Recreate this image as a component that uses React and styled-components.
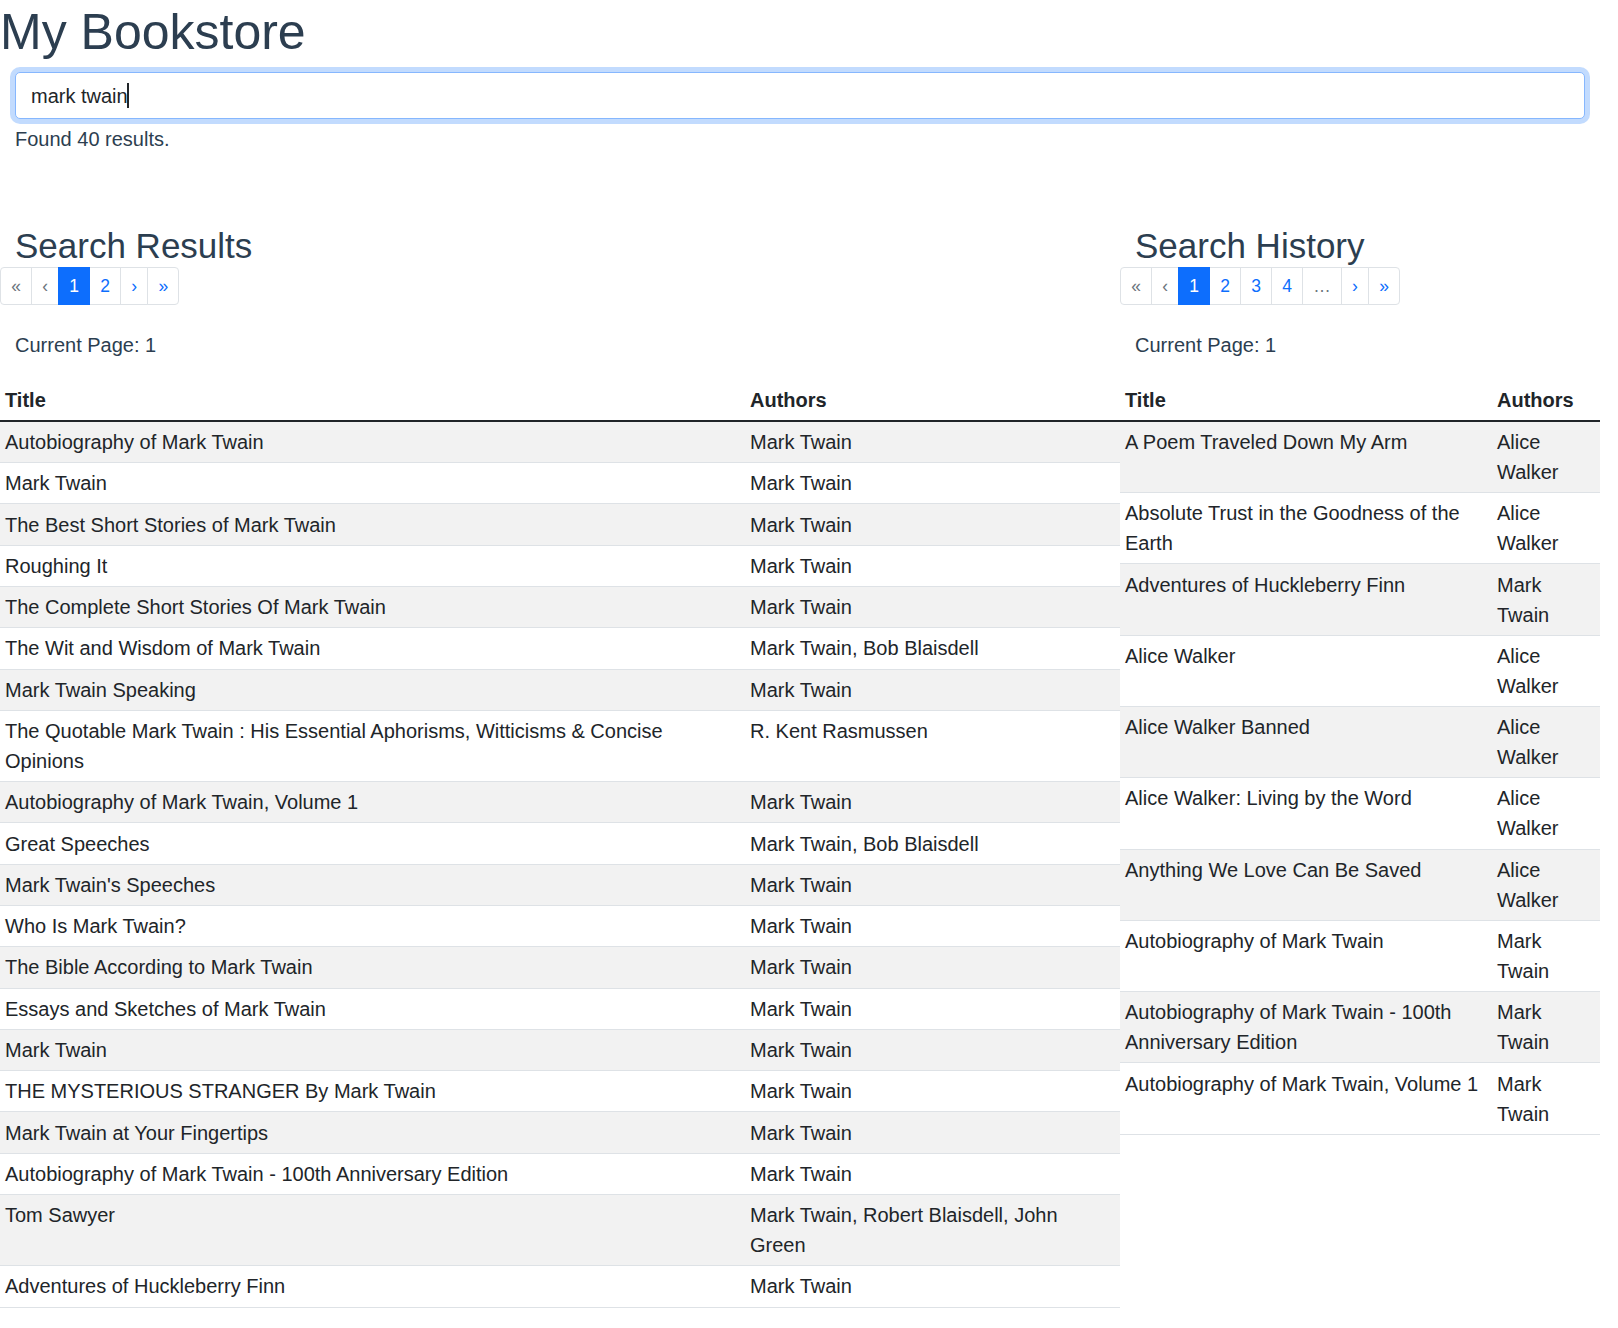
import styled, { createGlobalStyle } from 'styled-components'

const GlobalStyle = createGlobalStyle`
  body {
    margin: 0;
    font-family: "Liberation Sans", Arial, Helvetica, sans-serif;
    font-size: 20px;
    line-height: 1.5;
    color: #2c3e50;
    background: #fff;
  }
  * {
    box-sizing: border-box;
  }
`

const Page = styled.div`
  width: 1600px;
  padding-top: 2px;
`

const Title = styled.h1`
  margin: 0 0 10px;
  font-size: 50px;
  font-weight: 500;
  line-height: 1.2;
`

const SearchArea = styled.div`
  padding: 0 15px;
`

const InputWrap = styled.div`
  position: relative;
`

const SearchInput = styled.input`
  display: block;
  width: 100%;
  padding: 7.5px 15px;
  font-family: inherit;
  font-size: 20px;
  line-height: 1.5;
  color: #212529;
  background: #fff;
  border: 1px solid #86b7fe;
  border-radius: 5px;
  outline: 0;
  box-shadow: 0 0 0 5px rgba(13, 110, 253, 0.25);
  caret-color: transparent;
`

// text caret drawn over the input so the focused look stays in the picture
const Caret = styled.span`
  position: absolute;
  left: ${(p) => p.$left}px;
  top: 11px;
  width: 1.5px;
  height: 25px;
  background: #212529;
  pointer-events: none;
`

const ResultCount = styled.div`
  margin-top: 5px;
  font-size: 20px;
`

const Columns = styled.div`
  display: flex;
  margin-top: 70.5px;
`

const Column = styled.section`
  flex: 0 0 ${(p) => p.$width}px;
`

const SectionHeading = styled.h3`
  margin: 0;
  padding: 0 15px;
  font-size: 35px;
  font-weight: 500;
  line-height: 1.2;
`

const Pager = styled.ul`
  display: flex;
  margin: 0;
  padding: 0;
  list-style: none;
`

const PageItem = styled.li`
  & + & {
    margin-left: -1px;
  }
  &:first-child span {
    border-radius: 4px 0 0 4px;
  }
  &:last-child span {
    border-radius: 0 4px 4px 0;
  }
`

const PageLink = styled.span`
  display: block;
  padding: 5px 10.15px;
  font-size: 17.5px;
  line-height: 1.5;
  border: 1px solid ${(p) => (p.$active ? '#0d6efd' : '#dee2e6')};
  background: ${(p) => (p.$active ? '#0d6efd' : '#fff')};
  color: ${(p) => (p.$active ? '#fff' : p.$disabled ? '#6c757d' : '#0d6efd')};
  position: relative;
  z-index: ${(p) => (p.$active ? 2 : 0)};
`

const CurrentPage = styled.p`
  margin: 24.75px 0 20.4px;
  padding: 0 15px;
`

const Table = styled.table`
  width: 100%;
  border-collapse: collapse;
  color: #212529;
  margin-bottom: 20px;
`

const HeadCell = styled.th`
  width: ${(p) => (p.$width ? `${p.$width}px` : 'auto')};
  padding: 5px;
  text-align: left;
  vertical-align: top;
  font-weight: bold;
  line-height: 30px;
  border-bottom: 2px solid #212529;
`

const Row = styled.tr`
  background: ${(p) => (p.$striped ? '#f2f2f2' : '#fff')};
  border-bottom: 1px solid #dee2e6;
`

const Cell = styled.td`
  padding: 5.15px 5px;
  vertical-align: top;
  line-height: 30px;
`

const results = [
  ['Autobiography of Mark Twain', 'Mark Twain'],
  ['Mark Twain', 'Mark Twain'],
  ['The Best Short Stories of Mark Twain', 'Mark Twain'],
  ['Roughing It', 'Mark Twain'],
  ['The Complete Short Stories Of Mark Twain', 'Mark Twain'],
  ['The Wit and Wisdom of Mark Twain', 'Mark Twain, Bob Blaisdell'],
  ['Mark Twain Speaking', 'Mark Twain'],
  ['The Quotable Mark Twain : His Essential Aphorisms, Witticisms & Concise Opinions', 'R. Kent Rasmussen'],
  ['Autobiography of Mark Twain, Volume 1', 'Mark Twain'],
  ['Great Speeches', 'Mark Twain, Bob Blaisdell'],
  ["Mark Twain's Speeches", 'Mark Twain'],
  ['Who Is Mark Twain?', 'Mark Twain'],
  ['The Bible According to Mark Twain', 'Mark Twain'],
  ['Essays and Sketches of Mark Twain', 'Mark Twain'],
  ['Mark Twain', 'Mark Twain'],
  ['THE MYSTERIOUS STRANGER By Mark Twain', 'Mark Twain'],
  ['Mark Twain at Your Fingertips', 'Mark Twain'],
  ['Autobiography of Mark Twain - 100th Anniversary Edition', 'Mark Twain'],
  ['Tom Sawyer', 'Mark Twain, Robert Blaisdell, John Green'],
  ['Adventures of Huckleberry Finn', 'Mark Twain'],
]

const history = [
  ['A Poem Traveled Down My Arm', 'Alice Walker'],
  ['Absolute Trust in the Goodness of the Earth', 'Alice Walker'],
  ['Adventures of Huckleberry Finn', 'Mark Twain'],
  ['Alice Walker', 'Alice Walker'],
  ['Alice Walker Banned', 'Alice Walker'],
  ['Alice Walker: Living by the Word', 'Alice Walker'],
  ['Anything We Love Can Be Saved', 'Alice Walker'],
  ['Autobiography of Mark Twain', 'Mark Twain'],
  ['Autobiography of Mark Twain - 100th Anniversary Edition', 'Mark Twain'],
  ['Autobiography of Mark Twain, Volume 1', 'Mark Twain'],
]

function Pagination({ pages }) {
  const items = [
    { label: '«', disabled: true },
    { label: '‹', disabled: true },
    ...pages.map((p, i) => ({ label: p, active: i === 0, disabled: p === '…' })),
    { label: '›' },
    { label: '»' },
  ]
  return (
    <Pager>
      {items.map((it, i) => (
        <PageItem key={i}>
          <PageLink $active={it.active} $disabled={it.disabled}>
            {it.label}
          </PageLink>
        </PageItem>
      ))}
    </Pager>
  )
}

function BookTable({ books, titleWidth }) {
  return (
    <Table>
      <thead>
        <tr>
          <HeadCell $width={titleWidth}>Title</HeadCell>
          <HeadCell>Authors</HeadCell>
        </tr>
      </thead>
      <tbody>
        {books.map(([title, authors], i) => (
          <Row key={i} $striped={i % 2 === 0}>
            <Cell>{title}</Cell>
            <Cell>{authors}</Cell>
          </Row>
        ))}
      </tbody>
    </Table>
  )
}

export default function App() {
  return (
    <Page>
      <GlobalStyle />
      <Title>My Bookstore</Title>
      <SearchArea>
        <InputWrap>
          <SearchInput defaultValue="mark twain" />
          <Caret $left={112} />
        </InputWrap>
        <ResultCount>Found 40 results.</ResultCount>
      </SearchArea>
      <Columns>
        <Column $width={1120}>
          <SectionHeading>Search Results</SectionHeading>
          <Pagination pages={['1', '2']} />
          <CurrentPage>Current Page: 1</CurrentPage>
          <BookTable books={results} titleWidth={745} />
        </Column>
        <Column $width={480}>
          <SectionHeading>Search History</SectionHeading>
          <Pagination pages={['1', '2', '3', '4', '…']} />
          <CurrentPage>Current Page: 1</CurrentPage>
          <BookTable books={history} titleWidth={372} />
        </Column>
      </Columns>
    </Page>
  )
}
